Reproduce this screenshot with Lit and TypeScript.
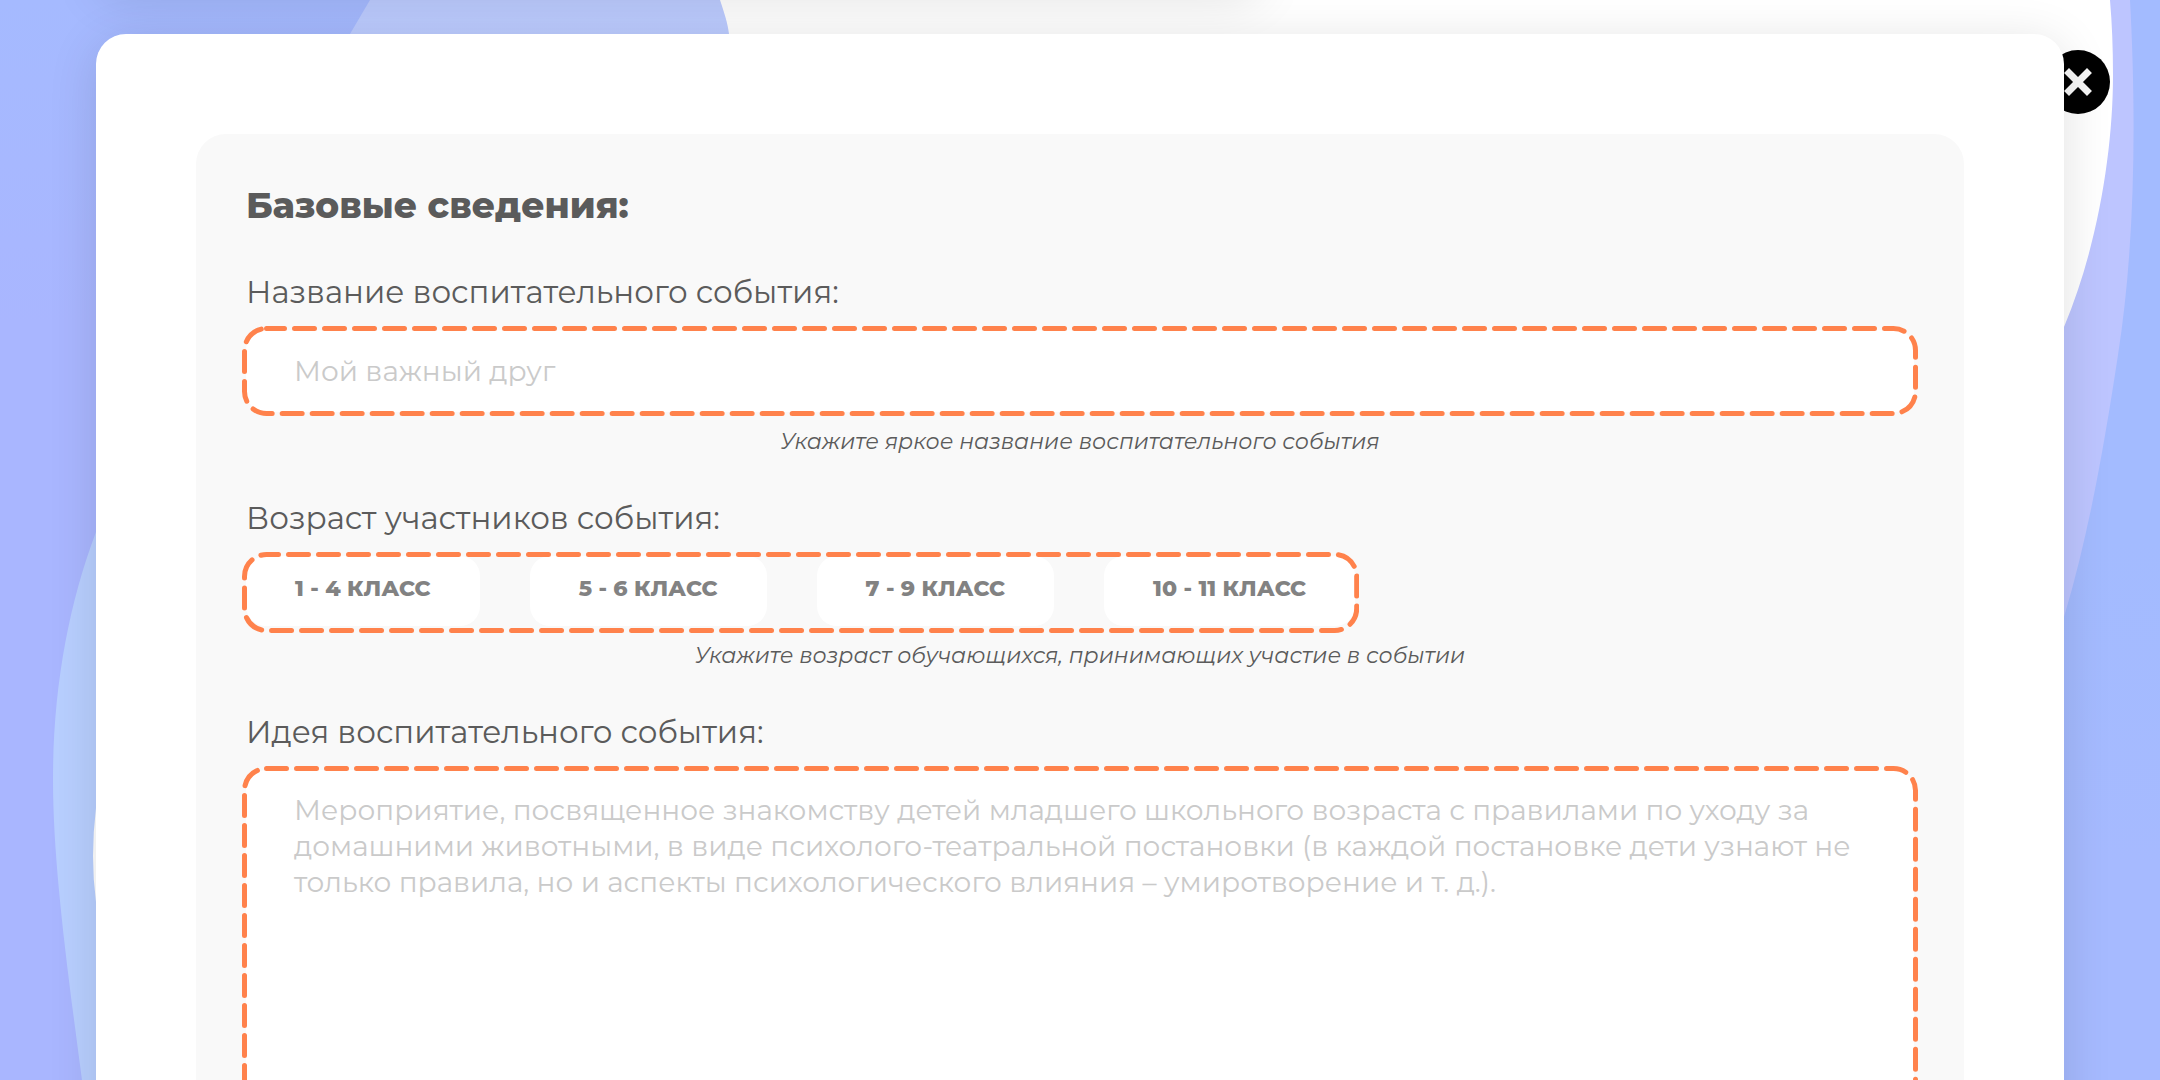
import { LitElement, html, css, svg } from "lit";
import { customElement, property, state } from "lit/decorators.js";

/** Rounded dashed outline drawn around its slotted content. */
@customElement("dashed-frame")
export class DashedFrame extends LitElement {
  /** Shift of the dash pattern along the outline. */
  @property({ type: Number }) phase = 0;

  static styles = css`
    :host {
      display: block;
      position: relative;
    }
    .outline {
      position: absolute;
      inset: -4px;
      width: calc(100% + 8px);
      height: calc(100% + 8px);
      pointer-events: none;
    }
    :host([roomy]) .outline {
      height: calc(100% + 11px);
    }
    .stroke {
      x: 2.5px;
      y: 2.5px;
      width: calc(100% - 5px);
      height: calc(100% - 5px);
      fill: none;
      stroke: #ff824c;
      stroke-width: 5px;
      stroke-linecap: round;
      stroke-dasharray: 20 10;
    }
  `;

  render() {
    return html`
      <slot></slot>
      <svg class="outline" aria-hidden="true">
        ${svg`<rect class="stroke" rx="22" ry="22" stroke-dashoffset=${this.phase}></rect>`}
      </svg>
    `;
  }
}

@customElement("app-root")
export class AppRoot extends LitElement {
  @state() private picked = new Set<string>();

  private ages = ["1 - 4 класс", "5 - 6 класс", "7 - 9 класс", "10 - 11 класс"];

  static styles = css`
    :host {
      display: block;
      position: relative;
      height: 100vh;
      overflow: hidden auto;
      scrollbar-width: none;
      background:
        linear-gradient(180deg, #a3bbff 0%, #a3bbff 50%, #a6baff 80%) right / 50% 100% no-repeat,
        linear-gradient(180deg, #a5baff 0%, #a9b6ff 30%);
      color: #5b5b5b;
      font-family: Montserrat, "Open Sans", "Noto Sans", sans-serif;
    }
    .backdrop {
      position: absolute;
      inset: 0;
      width: 100%;
      height: 100%;
    }
    .previous {
      position: absolute;
      top: -60px;
      left: 96px;
      width: 54%;
      height: 50px;
      border-radius: 30px;
      box-shadow: 0 8px 50px rgba(0, 0, 0, 0.12);
    }
    .close {
      position: absolute;
      top: 50px;
      right: 50px;
      width: 64px;
      height: 64px;
      padding: 0;
      border: 0;
      border-radius: 50%;
      background: #000;
      cursor: pointer;
    }
    .close svg {
      display: block;
      width: 64px;
      height: 64px;
    }
    .card {
      position: relative;
      margin: 34px 96px 0;
      padding: 100px;
      border-radius: 30px;
      background: #fff;
      box-shadow: 0 8px 50px rgba(0, 0, 0, 0.12);
    }
    .panel {
      padding: 50px;
      border-radius: 30px;
      background: #f9f9f9;
    }
    .title {
      margin: 0 0 48px;
      font-size: 36px;
      font-weight: 800;
      line-height: 42px;
    }
    .group {
      margin: 0 0 44px;
      padding: 0;
      border: 0;
    }
    .label {
      display: block;
      margin: 0 0 20px;
      font-size: 31px;
      font-weight: 400;
      line-height: 36px;
    }
    .field {
      display: block;
      box-sizing: border-box;
      width: 100%;
      margin: 0;
      padding: 0 48px;
      border: 0;
      border-radius: 20px;
      background: #fff;
      color: #5b5b5b;
      font-family: inherit;
      font-size: 28px;
      line-height: 36px;
      outline: none;
      resize: none;
    }
    .field::placeholder {
      color: #cacaca;
      opacity: 1;
    }
    .line {
      height: 82px;
    }
    .area {
      height: 400px;
      padding-top: 22px;
      padding-bottom: 22px;
    }
    .hint {
      margin: 16px 0 0;
      font-size: 22px;
      font-style: italic;
      line-height: 28px;
      text-align: center;
    }
    .ages {
      display: flex;
      gap: 50px;
    }
    .fit {
      width: fit-content;
    }
    .chip {
      height: 70px;
      padding: 0 49px 5px;
      border: 0;
      border-radius: 20px;
      background: #fff;
      color: #828282;
      font-family: inherit;
      font-size: 22px;
      font-weight: 800;
      line-height: 28px;
      text-transform: uppercase;
      cursor: pointer;
    }
    .chip[aria-pressed="true"] {
      color: #ff824c;
    }
  `;

  private toggle(age: string) {
    const next = new Set(this.picked);
    if (!next.delete(age)) next.add(age);
    this.picked = next;
  }

  render() {
    return html`
      <svg class="backdrop" viewBox="0 0 2160 1080" preserveAspectRatio="none" aria-hidden="true">
        <defs>
          <linearGradient id="tint" x1="0" y1="0" x2="0" y2="1">
            <stop offset="0" stop-color="#bdccff" />
            <stop offset="0.5" stop-color="#b8cfff" />
          </linearGradient>
        </defs>
        <path
          fill="url(#tint)"
          d="M370 0L350 34C250 250 130 440 96 532C68 606 53 690 53 780C53 860 66 960 82 1080H1080V0Z"
        />
        <path fill="#bdc5ff" d="M1080 0H2130C2136 110 2136 240 2118 355C2105 440 2090 530 2064 617L1080 1080Z" />
        <path
          fill="#fff"
          d="M720 0C724 12 728 24 729 34V200L96 808Q90 857 96 902L1080 1080L2064 327C2098 246 2113 150 2113 75Q2113 35 2110 0Z"
        />
      </svg>
      <div class="previous"></div>
      <button class="close" type="button" aria-label="Закрыть">
        <svg viewBox="0 0 64 64" aria-hidden="true">
          <path
            d="M23 23L41 41M41 23L23 41"
            fill="none"
            stroke="#f7f7f7"
            stroke-width="7"
            stroke-linecap="square"
          />
        </svg>
      </button>
      <form class="card">
        <section class="panel">
          <h2 class="title">Базовые сведения:</h2>
          <div class="group">
            <label class="label" for="name">Название воспитательного события:</label>
            <dashed-frame .phase=${2}>
              <input class="field line" id="name" type="text" placeholder="Мой важный друг" />
            </dashed-frame>
            <p class="hint">Укажите яркое название воспитательного события</p>
          </div>
          <div class="group" role="group" aria-labelledby="ages">
            <div class="label" id="ages">Возраст участников события:</div>
            <dashed-frame class="fit" roomy .phase=${8}>
              <div class="ages">
                ${this.ages.map(
                  (age) => html`
                    <button
                      class="chip"
                      type="button"
                      aria-pressed=${this.picked.has(age)}
                      @click=${() => this.toggle(age)}
                    >
                      ${age}
                    </button>
                  `,
                )}
              </div>
            </dashed-frame>
            <p class="hint">Укажите возраст обучающихся, принимающих участие в событии</p>
          </div>
          <div class="group">
            <label class="label" for="idea">Идея воспитательного события:</label>
            <dashed-frame>
              <textarea
                class="field area"
                id="idea"
                placeholder="Мероприятие, посвященное знакомству детей младшего школьного возраста с правилами по уходу за домашними животными, в виде психолого-театральной постановки (в каждой постановке дети узнают не только правила, но и аспекты психологического влияния – умиротворение и т. д.)."
              ></textarea>
            </dashed-frame>
          </div>
        </section>
      </form>
    `;
  }
}
